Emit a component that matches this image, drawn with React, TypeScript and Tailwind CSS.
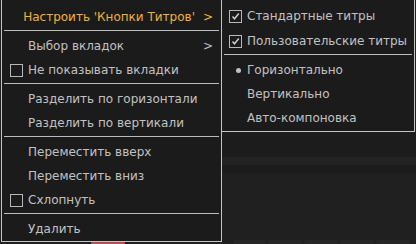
import React from "react";

const font = { fontFamily: '"DejaVu Sans", sans-serif' };

function Check({ checked }: { checked?: boolean }) {
  return (
    <span className="w-[13px] h-[13px] border border-[#b8b8b8] flex items-center justify-center shrink-0">
      {checked && (
        <svg width="9" height="9" viewBox="0 0 9 9">
          <path d="M1.5 4.5 L3.5 6.8 L7.8 1.5" stroke="#d0d0d0" strokeWidth="1.4" fill="none" />
        </svg>
      )}
    </span>
  );
}

function Sep() {
  return <div className="h-px bg-[#bdbdbd] mx-[2px] mt-[1px] mb-[3px] shrink-0" />;
}

function Item({ label, check, checked, arrow, active }: { label: string; check?: boolean; checked?: boolean; arrow?: boolean; active?: boolean }) {
  return (
    <div className={`h-[24px] shrink-0 flex items-center pl-[8px] pr-[8px] ${active ? "text-[#f2b233]" : "text-[#c2c2c2]"}`}>
      <span className="w-[18px] flex items-center">{check && <Check checked={checked} />}</span>
      <span className="flex-1 whitespace-nowrap">{label}</span>
      {arrow && <span className="ml-2">&gt;</span>}
    </div>
  );
}

function SubRow({ children, className = "" }: { children: React.ReactNode; className?: string }) {
  return <div className={`h-[24px] shrink-0 flex items-center pl-[7px] text-[#c2c2c2] ${className}`}>{children}</div>;
}

export default function App() {
  return (
    <div className="relative w-[416px] h-[244px] bg-[#202020] overflow-hidden text-[12px]" style={font}>
      <div className="absolute left-[222px] top-[130px] w-[194px] h-[43px] bg-[#1c1c1c]" />
      <div className="absolute left-[222px] top-[157px] w-[194px] h-[8px] bg-[#232323]" />
      <div className="absolute left-[233px] top-[240px] flex gap-[2px]">
        <div className="w-[33px] h-[8px] rounded-[3px] bg-[#262626]" />
        <div className="w-[34px] h-[8px] rounded-[3px] bg-[#262626]" />
        <div className="w-[34px] h-[8px] rounded-[3px] bg-[#262626]" />
        <div className="w-[34px] h-[8px] rounded-[3px] bg-[#262626]" />
        <div className="w-[34px] h-[8px] rounded-[3px] bg-[#262626]" />
      </div>
      <div className="absolute left-[91px] top-[242px] w-[34px] h-[4px] bg-[#b05050]" />
      <div className="absolute left-[1px] top-[-1px] w-[221px] h-[243px] bg-[#1b1b1b] border border-[#c4c4c4] flex flex-col pt-[5px]">
        <Item label="Настроить 'Кнопки Титров'" arrow active />
        <Sep />
        <Item label="Выбор вкладок" arrow />
        <Item label="Не показывать вкладки" check />
        <Sep />
        <Item label="Разделить по горизонтали" />
        <Item label="Разделить по вертикали" />
        <Sep />
        <Item label="Переместить вверх" />
        <Item label="Переместить вниз" />
        <Item label="Схлопнуть" check />
        <Sep />
        <Item label="Удалить" />
      </div>
      <div className="absolute left-[221px] top-[-1px] w-[194px] h-[133px] bg-[#1b1b1b] border border-[#c4c4c4] flex flex-col pt-[4px]">
        <SubRow className="mb-[1px]">
          <span className="w-[18px]"><Check checked /></span>
          <span className="whitespace-nowrap">Стандартные титры</span>
        </SubRow>
        <SubRow>
          <span className="w-[18px]"><Check checked /></span>
          <span className="whitespace-nowrap">Пользовательские титры</span>
        </SubRow>
        <Sep />
        <SubRow>
          <span className="w-[18px] pl-[7px] flex items-center"><span className="w-[5px] h-[5px] rounded-full bg-[#c2c2c2]" /></span>
          <span className="whitespace-nowrap">Горизонтально</span>
        </SubRow>
        <SubRow className="pl-[25px]">Вертикально</SubRow>
        <SubRow className="pl-[25px]">Авто-компоновка</SubRow>
      </div>
    </div>
  );
}
